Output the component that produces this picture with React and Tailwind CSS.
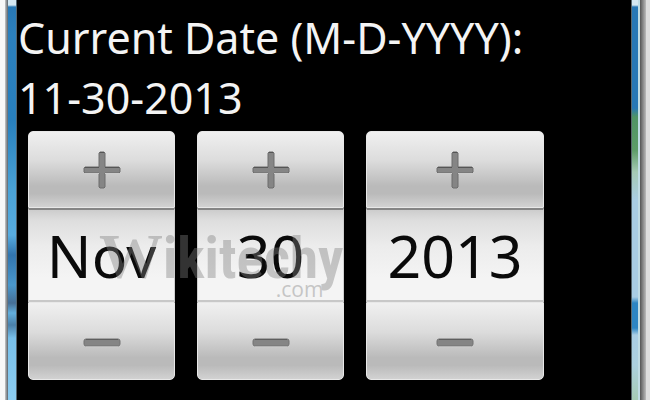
import { useState } from "react";
import clsx from "clsx";

const MONTHS = ["Jan", "Feb", "Mar", "Apr", "May", "Jun", "Jul", "Aug", "Sep", "Oct", "Nov", "Dec"];

const PlusIcon = () => (
  <svg width="38" height="38" viewBox="0 0 38 38" aria-hidden="true">
    <path
      d="M17 1h4l1 1v14h14l1 1v4l-1 1H22v14l-1 1h-4l-1-1V22H2l-1-1v-4l1-1h14V2z"
      fill="#858585"
      stroke="#6c6c6c"
    />
    <path d="M2 16.5h14M22 16.5h14M17 1.5h4" stroke="#555555" />
    <path d="M2 22.5h14M22 22.5h14" stroke="#cccccc" />
  </svg>
);

const MinusIcon = () => (
  <svg width="38" height="10" viewBox="0 0 38 10" aria-hidden="true">
    <rect x="1" y="1" width="36" height="7" rx="2" fill="#858585" stroke="#737373" />
    <path d="M3 1.5h32" stroke="#5e5e5e" />
    <path d="M3 9h32" stroke="#cccccc" />
  </svg>
);

const stepClass =
  "flex w-full items-center justify-center border border-[#e8e8e8] bg-[linear-gradient(#f0f0f0,#dcdcdc_38%,#bababa_72%,#bababa_82%,#d2d2d2)]";

const NumberPicker = ({ label, value, onStep, wide }) => (
  <div className={clsx("flex flex-col", wide ? "w-[178px]" : "w-[147px]")}>
    <button
      type="button"
      aria-label={`Increase ${label}`}
      onClick={() => onStep(1)}
      className={clsx(stepClass, "h-[77px] rounded-t-[5px]")}
    >
      <PlusIcon />
    </button>
    <input
      type="text"
      aria-label={label}
      value={value}
      readOnly
      className="h-[94px] w-full border-x border-t-2 border-b-2 border-x-[#cfcfcf] border-t-[#858585] border-b-[#c8c8c8] bg-[linear-gradient(#cdcdcd,#dedede_12%,#ececec_40%,#f4f4f4_75%)] text-center text-[59px] text-[#0a0a0a] outline-none"
    />
    <button
      type="button"
      aria-label={`Decrease ${label}`}
      onClick={() => onStep(-1)}
      className={clsx(stepClass, "h-[78px] rounded-b-[5px] pt-1")}
    >
      <MinusIcon />
    </button>
  </div>
);

const Watermark = () => (
  <div className="pointer-events-none absolute top-[88px] left-[82px] opacity-40">
    <div className="flex items-baseline leading-[76px] font-bold text-[#808080]">
      <span className="font-['Liberation_Serif',serif] text-[64px]">W</span>
      <span className="font-['Roboto_Condensed','Liberation_Serif',serif] text-[57px]">ikitechy</span>
    </div>
    <div className="-mt-5 pr-5 text-right font-['Open_Sans',sans-serif] text-[21px] leading-6 text-[#808080]">
      .com
    </div>
  </div>
);

export default function App() {
  const [date, setDate] = useState({ month: 10, day: 30, year: 2013 });

  const stepMonth = (n) => setDate({ ...date, month: (date.month + n + 12) % 12 });
  const stepDay = (n) => setDate({ ...date, day: ((date.day - 1 + n + 31) % 31) + 1 });
  const stepYear = (n) => setDate({ ...date, year: date.year + n });

  return (
    <div className="flex min-h-screen bg-black font-['Noto_Sans',sans-serif]">
      <div className="flex shrink-0">
        <div className="w-[5px] bg-[#f8f8f8]" />
        <div className="w-[3px] bg-[linear-gradient(90deg,#c8c8c8,#58626a)]" />
        <div className="w-2 bg-[linear-gradient(#d5e8f2_0px,#d5e8f2_5px,#2878b5_7px,#2c80bd_35px,#287fbd_120px,#4aa2d6_190px,#58acdf_235px,#3275ae_255px,#4a98cc_285px,#466f96_303px,#62afdd_313px,#4a80aa_325px,#78c0ea_338px,#8cccf0)]" />
        <div className="w-px bg-[#52646f]" />
      </div>

      <main className="min-w-0 flex-1 pt-2 pb-5">
        <h1 className="pl-px text-[43px] leading-[60px] text-[#f4f4f4]">
          Current Date (M-D-YYYY):
          <br />
          {date.month + 1}-{date.day}-{date.year}
        </h1>
        <div className="relative mt-[3px] flex gap-[22px] pl-[11px]">
          <NumberPicker label="month" value={MONTHS[date.month]} onStep={stepMonth} />
          <NumberPicker label="day" value={date.day} onStep={stepDay} />
          <NumberPicker label="year" value={date.year} onStep={stepYear} wide />
          <Watermark />
        </div>
      </main>

      <div className="flex shrink-0">
        <div className="w-px bg-[#59686e]" />
        <div className="w-[6px] bg-[linear-gradient(#d5e8f2_0px,#d5e8f2_5px,#2878b5_7px,#2878b5_108px,#4f9465_117px,#5d9c68_150px,#a5c9b4_172px,#a9cde3_200px,#a9cde3_297px,#2d85c2_303px,#2d85c2_328px,#a9cde3_335px,#acd0df_365px,#a5cbb4)]" />
        <div className="w-[2px] bg-[#c0dce4]" />
        <div className="w-[6px] bg-[linear-gradient(90deg,#555555,#bcbcbc)]" />
        <div className="w-1 bg-[#dedede]" />
      </div>
    </div>
  );
}
